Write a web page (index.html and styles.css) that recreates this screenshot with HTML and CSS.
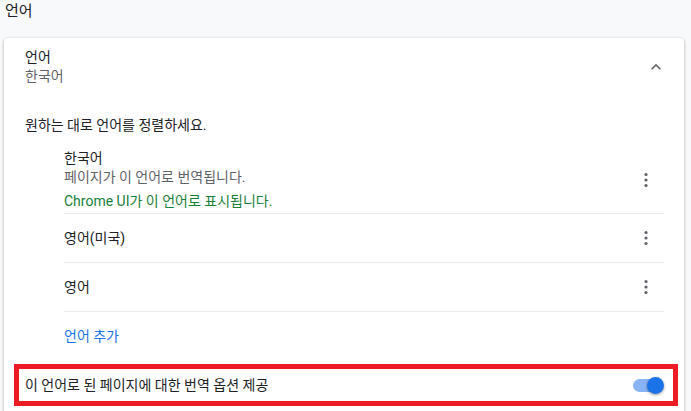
FILE: index.html
```html
<!DOCTYPE html>
<html lang="ko">
<head>
    <meta charset="UTF-8">
    <meta name="viewport" content="width=device-width, initial-scale=1.0">
    <title>언어</title>
    <link rel="stylesheet" href="styles.css">
</head>
<body>
    <h2 class="page-title">언어</h2>
    <div class="card">
        <div class="card-header">
            <div>
                <div class="label">언어</div>
                <div class="secondary">한국어</div>
            </div>
            <button class="icon-btn" type="button" aria-label="접기">
                <svg width="20" height="20" viewBox="0 0 24 24"><path d="M12 8l-6 6 1.41 1.41L12 10.83l4.59 4.58L18 14z" fill="#5f6368"/></svg>
            </button>
        </div>
        <div class="hint">원하는 대로 언어를 정렬하세요.</div>
        <ul class="lang-list">
            <li class="lang-item first">
                <div>
                    <div class="label">한국어</div>
                    <div class="secondary">페이지가 이 언어로 번역됩니다.</div>
                    <div class="ui-note">Chrome UI가 이 언어로 표시됩니다.</div>
                </div>
                <button class="icon-btn" type="button" aria-label="더보기">
                    <svg width="20" height="20" viewBox="0 0 20 20"><circle cx="10" cy="4.5" r="1.6" fill="#5f6368"/><circle cx="10" cy="10" r="1.6" fill="#5f6368"/><circle cx="10" cy="15.5" r="1.6" fill="#5f6368"/></svg>
                </button>
            </li>
            <li class="lang-item">
                <div class="label">영어(미국)</div>
                <button class="icon-btn" type="button" aria-label="더보기">
                    <svg width="20" height="20" viewBox="0 0 20 20"><circle cx="10" cy="4.5" r="1.6" fill="#5f6368"/><circle cx="10" cy="10" r="1.6" fill="#5f6368"/><circle cx="10" cy="15.5" r="1.6" fill="#5f6368"/></svg>
                </button>
            </li>
            <li class="lang-item">
                <div class="label">영어</div>
                <button class="icon-btn" type="button" aria-label="더보기">
                    <svg width="20" height="20" viewBox="0 0 20 20"><circle cx="10" cy="4.5" r="1.6" fill="#5f6368"/><circle cx="10" cy="10" r="1.6" fill="#5f6368"/><circle cx="10" cy="15.5" r="1.6" fill="#5f6368"/></svg>
                </button>
            </li>
            <li class="add-lang"><a href="#">언어 추가</a></li>
        </ul>
        <div class="offer-row">
            <div class="label">이 언어로 된 페이지에 대한 번역 옵션 제공</div>
            <span class="toggle on"><span class="knob"></span></span>
        </div>
    </div>
</body>
</html>
```

FILE: styles.css
```css
body {
    font-family: Roboto, "Noto Sans CJK KR", sans-serif;
    font-size: 14px;
    margin: 0;
    background-color: #f8f9fa;
    color: #202124;
}
.page-title {
    margin: 0;
    padding: 1px 5px;
    font-size: 15px;
    font-weight: 400;
    line-height: 20px;
}
.card {
    margin: 16px 7px 0 4px;
    background-color: #fff;
    border-radius: 4px;
    box-shadow: 0 1px 2px rgba(60, 64, 67, 0.3), 0 1px 3px 1px rgba(60, 64, 67, 0.15);
    padding-bottom: 20px;
}
.label,
.secondary,
.ui-note {
    line-height: 19px;
}
.secondary {
    color: #5f6368;
}
.ui-note {
    color: #188038;
    margin-top: 5px;
}
.card-header {
    display: flex;
    align-items: center;
    justify-content: space-between;
    padding: 10px 16px 16px 21px;
}
.icon-btn {
    width: 24px;
    height: 24px;
    padding: 0;
    border: none;
    background: none;
    display: flex;
    align-items: center;
    justify-content: center;
}
.hint {
    padding: 13px 21px 0;
    line-height: 20px;
}
.lang-list {
    list-style: none;
    margin: 14px 20px 0 60px;
    padding: 0;
}
.lang-item {
    display: flex;
    align-items: center;
    justify-content: space-between;
    box-sizing: border-box;
    height: 49px;
    padding-right: 6px;
    border-top: 1px solid #e8eaed;
}
.lang-item.first {
    height: 64px;
    padding-bottom: 2px;
    border-top: none;
}
.add-lang {
    box-sizing: border-box;
    height: 46px;
    display: flex;
    align-items: center;
    border-top: 1px solid #e8eaed;
}
.add-lang a {
    color: #1a73e8;
    text-decoration: none;
}
.offer-row {
    display: flex;
    align-items: center;
    justify-content: space-between;
    box-sizing: border-box;
    height: 42px;
    margin: 7px 6px 0 10px;
    padding: 0 9px 0 6px;
    border: 5px solid #ed1c24;
}
.toggle {
    position: relative;
    width: 28px;
    height: 13px;
    margin-right: 3px;
    border-radius: 7px;
    background-color: #8ab4f8;
}
.toggle .knob {
    position: absolute;
    top: -2px;
    right: -3px;
    width: 17px;
    height: 17px;
    border-radius: 50%;
    background-color: #1a73e8;
    box-shadow: 0 1px 3px rgba(0, 0, 0, 0.4);
}
```
